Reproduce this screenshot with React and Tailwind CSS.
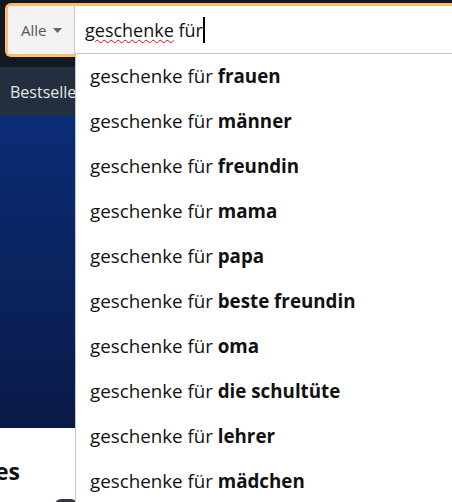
import React from 'react';

const suggestions = [
    'frauen',
    'männer',
    'freundin',
    'mama',
    'papa',
    'beste freundin',
    'oma',
    'die schultüte',
    'lehrer',
    'mädchen',
];

export default function App() {
    return (
        <div className="relative w-[452px] h-[502px] overflow-hidden bg-white font-['Open_Sans',sans-serif]">
            {/* header */}
            <div className="bg-[#131921] h-[67px] pt-[3px] pl-[5px]">
                <div className="flex h-[54px] rounded-l-[6px] border-[3px] border-r-0 border-[#febd69] bg-white overflow-hidden">
                    <div className="flex items-center w-[67px] pl-[13px] gap-[7px] bg-[#f3f3f3] border-r border-[#cdcdcd] text-[15px] text-[#555]">
                        <span>Alle</span>
                        <svg width="9" height="5" viewBox="0 0 9 5"><path d="M0 0h9L4.5 5z" fill="#666" /></svg>
                    </div>
                    <div className="flex items-center pl-[10px] text-[18px] text-[#111]">
                        <span className="underline decoration-wavy decoration-red-600 decoration-1 underline-offset-2">geschenke</span>
                        <span className="whitespace-pre"> für</span>
                        <span className="w-[2px] h-[26px] bg-black"></span>
                    </div>
                </div>
            </div>

            {/* nav */}
            <div className="bg-[#232f3e] h-[49px] flex items-center pl-[10px] text-[16px] font-medium text-[#e6e6e6]">
                Bestseller
            </div>

            {/* banner */}
            <div className="h-[312px] bg-gradient-to-b from-[#0a2d77] to-[#0a1a48]"></div>

            <div className="pt-[32px] -ml-[5px] text-[23px] font-bold text-[#0f1111] leading-none">
                es
            </div>
            <div className="mt-[16px] ml-[55px] w-[22px] h-[6px] bg-[#3a3540] rounded-t-full"></div>

            {/* suggestions dropdown */}
            <div className="absolute left-[75px] top-[53px] right-0 bottom-0 bg-white border-l border-t border-[#c4c4c4]">
                <ul>
                    {suggestions.map((s) => (
                        <li key={s} className="h-[45px] pl-[14px] flex items-center text-[18.75px] text-[#111]">
                            <span className="whitespace-pre">geschenke für </span>
                            <span className="font-bold">{s}</span>
                        </li>
                    ))}
                </ul>
            </div>
        </div>
    );
}
